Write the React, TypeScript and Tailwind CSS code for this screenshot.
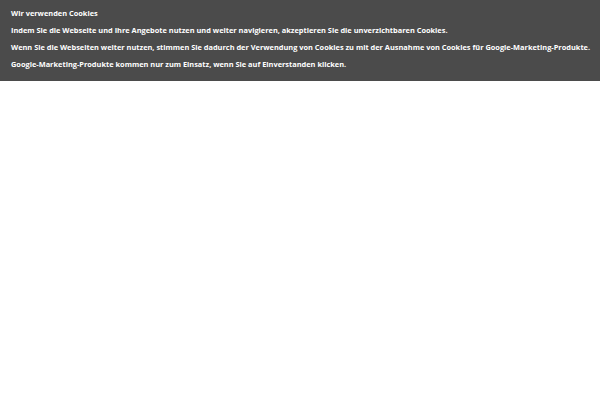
export default function App() {
  return (
    <div className="min-h-[400px] bg-white">
      <div
        className="bg-[#4b4b4b] px-[11px] pt-[9px] pb-[12px] text-[7.4px] font-bold leading-[9px] whitespace-nowrap text-white"
        style={{ fontFamily: '"Open Sans", "DejaVu Sans", sans-serif' }}
      >
        <p>Wir verwenden Cookies</p>
        <p className="mt-[8px]">
          Indem Sie die Webseite und Ihre Angebote nutzen und weiter navigieren, akzeptieren Sie die unverzichtbaren Cookies.
        </p>
        <p className="mt-[8px]">
          Wenn Sie die Webseiten weiter nutzen, stimmen Sie dadurch der Verwendung von Cookies zu mit der Ausnahme von Cookies für Google-Marketing-Produkte.
        </p>
        <p className="mt-[8px]">
          Google-Marketing-Produkte kommen nur zum Einsatz, wenn Sie auf Einverstanden klicken.
        </p>
      </div>
    </div>
  );
}
